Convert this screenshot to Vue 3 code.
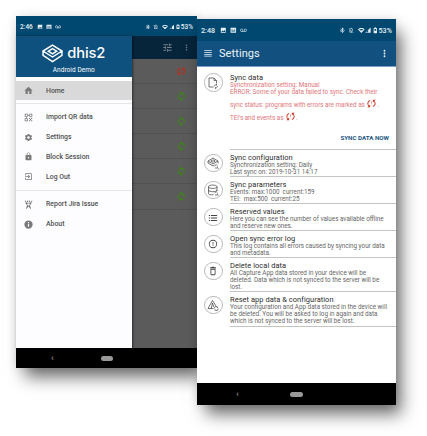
<script setup>
import { h } from 'vue'

const paths = {
  image: 'M21 3H3v18h18zM5 18l4-5 3 3.500L16 11l4 7z',
  mail: 'M2 3h20v18H2zm3 4v2l7 4.500L19 9V7l-7 4.500zm0 5v2h14v-2zm0 4v2h14v-2z',
  voicemail: 'M18.500 6C15.460 6 13 8.460 13 11.500c0 1.330.470 2.550 1.260 3.500H9.740c.790-.950 1.260-2.170 1.260-3.500C11 8.460 8.540 6 5.500 6S0 8.460 0 11.500 2.460 17 5.500 17h13c3.040 0 5.500-2.460 5.500-5.500S21.540 6 18.500 6zm-13 9a3.500 3.500 0 1 1 0-7 3.500 3.500 0 0 1 0 7zm13 0a3.500 3.500 0 1 1 0-7 3.500 3.500 0 0 1 0 7z',
  bluetooth: 'M7 12l-2-2-2 2 2 2 2-2zm10.710-4.290L12 2h-1v7.590L6.410 5 5 6.410 10.590 12 5 17.590 6.410 19 11 14.410V22h1l5.710-5.710-4.300-4.290 4.300-4.290zM13 5.830l1.880 1.880L13 9.590V5.830zm1.880 10.460L13 18.170v-3.760l1.880 1.880zM19 10l-2 2 2 2 2-2-2-2z',
  muted: 'M12 22a2 2 0 0 0 2-2h-4a2 2 0 0 0 2 2zM20.800 21.500L3.500 3.300 2.200 4.600l4.300 4.500C6.200 9.800 6 10.600 6 11.500V16l-2 2v1h12.800l2.700 2.800zM8 17v-6l6 6zM18 15.200V11c0-3-1.600-5.600-4.500-6.300V4a1.500 1.500 0 0 0-3 0v.700c-.800.200-1.500.500-2 .900l1.400 1.500C12.500 5.800 16 7.500 16 11v2z',
  wifi: 'M12 4C7.300 4 3.100 5.900 0 8.900L12 22 24 8.900C20.900 5.900 16.700 4 12 4zm0 3c3 0 5.500.900 7.600 2.200L16 13a7 7 0 0 0-8 0L4.400 9.200C6.500 7.900 9 7 12 7z',
  signal: 'M1 22h22V1zM13 11v9H5z',
  battery: 'M16 3.500h-2V1h-4v2.500H8C6.900 3.500 6 4.400 6 5.500v15.500c0 1.100.900 2 2 2h8c1.100 0 2-.900 2-2V5.500c0-1.100-.900-2-2-2zM9 7h6v7H9z',
  tune: 'M3 17v2h6v-2H3zM3 5v2h10V5H3zm10 16v-2h8v-2h-8v-2h-2v6h2zM7 9v2H3v2h4v2h2V9H7zm14 4v-2H11v2h10zm-6-4h2V7h4V5h-4V3h-2v6z',
  more: 'M12 8a2 2 0 1 0 0-4 2 2 0 0 0 0 4zm0 2a2 2 0 1 0 0 4 2 2 0 0 0 0-4zm0 6a2 2 0 1 0 0 4 2 2 0 0 0 0-4z',
  menu: 'M2 20h20v-2H2zm0-5h20v-2H2zm0-5h20V8H2zm0-7v2h20V3z',
  home: 'M10 21v-7h4v7h6v-9h3L12 2 1 12h3v9z',
  qr: 'M2 2h8v8H2zm2 2v4h4V4zM14 2h8v8h-8zm2 2v4h4V4zM2 14h8v8H2zm2 2v4h4v-4zM13 13h3v3h-3zM19 13h3v3h-3zM16 16h3v3h-3zM13 19h3v3h-3zM19 19h3v3h-3zM11 5h2v3h-2zM5 11h3v2H5zM17 11h3v1h-3z',
  gear: 'M19.140 12.940c.040-.300.060-.610.060-.940 0-.320-.020-.640-.070-.940l2.030-1.580a.490.490 0 0 0 .120-.610l-1.920-3.320a.488.488 0 0 0-.590-.220l-2.390.960c-.500-.380-1.030-.700-1.620-.940l-.360-2.540a.484.484 0 0 0-.480-.410h-3.840c-.240 0-.430.170-.470.410l-.360 2.540c-.590.240-1.130.570-1.620.940l-2.390-.960c-.220-.080-.470 0-.590.220L2.740 8.870c-.120.210-.080.470.120.610l2.030 1.580c-.050.300-.090.630-.090.940s.020.640.070.940l-2.030 1.580a.490.490 0 0 0-.120.610l1.920 3.320c.120.220.370.290.590.220l2.390-.960c.500.380 1.030.700 1.620.940l.360 2.540c.050.240.240.410.480.410h3.840c.240 0 .440-.170.470-.410l.360-2.540c.590-.240 1.130-.560 1.620-.940l2.390.960c.220.080.470 0 .590-.220l1.920-3.320c.120-.220.070-.470-.120-.610l-2.010-1.580zM12 15.600A3.600 3.600 0 1 1 12 8.400a3.600 3.600 0 0 1 0 7.200z',
  lock: 'M18 8h-1V6c0-2.760-2.240-5-5-5S7 3.240 7 6v2H6c-1.100 0-2 .900-2 2v10c0 1.100.900 2 2 2h12c1.100 0 2-.900 2-2V10c0-1.100-.900-2-2-2zm-6 9c-1.100 0-2-.900-2-2s.900-2 2-2 2 .900 2 2-.900 2-2 2zm3.100-9H8.900V6a3.100 3.100 0 0 1 6.200 0z',
  exit: 'M10.090 15.590L11.500 17l5-5-5-5-1.410 1.410L12.670 11H3v2h9.670zM19 3H5a2 2 0 0 0-2 2v4h2V5h14v14H5v-4H3v4a2 2 0 0 0 2 2h14c1.100 0 2-.900 2-2V5c0-1.100-.900-2-2-2z',
  bug: 'M3 1l5 6h8l5-6 1.500 1-4 6.500L21 9l-4 3-1 3 3 8h-2l-5-6-5 6H5l3-8-1-3-4-3 2.500-.500L1.500 2zM9 9v4l3 2 3-2V9zM8 2h3v3H8zm5 0h3v3h-3z',
  info: 'M12 1a11 11 0 1 0 0 22 11 11 0 0 0 0-22zm1.500 17h-3v-7.500h3zm0-9.500h-3v-3h3z',
  sync: 'M12 4V1L8 5l4 4V6a6 6 0 0 1 5.300 8.800l1.460 1.460A8 8 0 0 0 12 4zm0 14a6 6 0 0 1-5.300-8.800L5.240 7.740A8 8 0 0 0 12 20v3l4-4-4-4z',
  syncError: 'M3 12c0 2.210.910 4.200 2.360 5.640L3 20h6v-6l-2.240 2.240A6.003 6.003 0 0 1 9 6.350V4.260C5.550 5.150 3 8.270 3 12zM21 4h-6v6l2.240-2.240A6.003 6.003 0 0 1 15 17.650v2.090c3.450-.890 6-4.010 6-7.740 0-2.210-.910-4.200-2.360-5.640zM11.500 12.500h1V7.500h-1zM11.500 16h1v-1.500h-1z',
  list: 'M2 5h3v2H2zm0 6h3v2H2zm0 6h3v2H2zM7 5h15v2H7zm0 6h15v2H7zm0 6h15v2H7z',
  error: 'M11 15h2v2h-2zm0-8h2v6h-2zm1-5a10 10 0 1 0 0 20 10 10 0 0 0 0-20zm0 18a8 8 0 1 1 0-16 8 8 0 0 1 0 16z',
  trash: 'M6 20a2 2 0 0 0 2 2h8a2 2 0 0 0 2-2V7H6zM8 9h8v11H8zm7.500-6l-1-1h-5l-1 1H5v3h14V3z',
}

const outlines = {
  file: 'M13 20H4V2h10l5 5v6M14 2v5h5M14.500 18.500a3 3 0 0 1 5-2M21 18.500a3 3 0 0 1-5 2.500M19 14v2.500M17 21v2.500',
  layers: 'M12 2l10 6-10 6L2 8zM12 5.500L16.500 8 12 10.500 7.500 8zM2 8v4l10 6 3-2M22 8v5M15.500 18.500a3 3 0 0 1 5-2M21 19a3 3 0 0 1-5 2.500M20 21l3 2',
  database: 'M3 5.500c0-4.500 17-4.500 17 0s-17 4.500-17 0zM3 5.500V19c0 2 5 3.500 10 2.500M20 5.500V14M3 12c0 4.500 17 4.500 17 0M15.500 18.500a3 3 0 0 1 5-2M21 19a3 3 0 0 1-5 2.500M20 21l3 2',
  warning: 'M13 19H2L11 3l7 11M8.500 19L11 8l2.500 8M15 18.500a3 3 0 0 1 6-1v-2M22 19a3 3 0 0 1-6 2v2',
}

const Icon = ({ name }) =>
  h('svg', { viewBox: '0 0 24 24', class: 'icon' }, [
    outlines[name]
      ? h('path', { d: outlines[name], fill: 'none', stroke: 'currentColor', 'stroke-width': 1.5 })
      : h('path', { d: paths[name], fill: 'currentColor', 'fill-rule': 'evenodd' }),
  ])
Icon.props = ['name']

const leftStatus = ['image', 'mail', 'voicemail']
const rightStatus = ['bluetooth', 'muted', 'wifi', 'signal', 'battery']

const menu = [
  [
    { icon: 'qr', label: 'Import QR data' },
    { icon: 'gear', label: 'Settings' },
    { icon: 'lock', label: 'Block Session' },
    { icon: 'exit', label: 'Log Out' },
  ],
  [
    { icon: 'bug', label: 'Report Jira Issue' },
    { icon: 'info', label: 'About' },
  ],
]

const programs = ['syncError', 'sync', 'sync', 'sync', 'sync', 'sync']

const settings = [
  { icon: 'layers', title: 'Sync configuration', lines: ['Synchronization setting: Daily', 'Last sync on: 2019-10-31 14:17'] },
  { icon: 'database', title: 'Sync parameters', lines: ['Events: max:1000  current:159', 'TEI:  max:500  current:25'] },
  { icon: 'list', title: 'Reserved values', lines: ['Here you can see the number of values available offline', 'and reserve new ones.'] },
  { icon: 'error', title: 'Open sync error log', lines: ['This log contains all errors caused by syncing your data', 'and metadata.'] },
  { icon: 'trash', title: 'Delete local data', lines: ['All Capture App data stored in your device will be', 'deleted. Data which is not synced to the server will be', 'lost.'] },
  { icon: 'warning', title: 'Reset app data & configuration', lines: ['Your configuration and App data stored in the device will', 'be deleted. You will be asked to log in again and data', 'which is not synced to the server will be lost.'] },
]
</script>

<template>
  <main class="stage">
    <section class="phone home">
      <header class="status">
        <span class="clock">2:46</span>
        <Icon v-for="name in leftStatus" :key="name" :name="name" :class="name" />
        <span class="spacer"></span>
        <Icon v-for="name in rightStatus" :key="name" :name="name" :class="name" />
        <span class="charge">53%</span>
      </header>
      <div class="body">
        <nav class="drawer">
          <div class="brand">
            <div class="logo">
              <svg class="mark" viewBox="0 0 60 54">
                <path d="M30 3L57 20 30 37 3 20zM30 13L42 20.500 30 28 18 20.500zM3 20v12l27 18 27-18V20" />
              </svg>
              <span>dhis2</span>
            </div>
            <div class="server">Android Demo</div>
          </div>
          <div class="item active"><Icon name="home" /><span>Home</span></div>
          <div v-for="(group, i) in menu" :key="i" class="group">
            <div v-for="item in group" :key="item.label" class="item">
              <Icon :name="item.icon" /><span>{{ item.label }}</span>
            </div>
          </div>
        </nav>
        <div class="behind">
          <div class="tools"><Icon name="tune" /><Icon name="more" class="dots" /></div>
          <div v-for="(name, i) in programs" :key="i" class="program">
            <Icon :name="name" :class="name" />
          </div>
        </div>
      </div>
      <footer class="navbar"><span class="back">‹</span><span class="pill"></span></footer>
    </section>

    <section class="phone config">
      <header class="status">
        <span class="clock">2:48</span>
        <Icon v-for="name in leftStatus" :key="name" :name="name" :class="name" />
        <span class="spacer"></span>
        <Icon v-for="name in rightStatus" :key="name" :name="name" :class="name" />
        <span class="charge">53%</span>
      </header>
      <div class="appbar">
        <Icon name="menu" class="burger" />
        <h1>Settings</h1>
        <Icon name="more" class="dots" />
      </div>
      <div class="list">
        <article class="row failed">
          <div class="badge"><Icon name="file" /></div>
          <div class="text">
            <h2>Sync data</h2>
            <p>Synchronization setting: Manual</p>
            <p>ERROR: Some of your data failed to sync. Check their</p>
            <p class="tall">sync status: programs with errors are marked as <Icon name="syncError" />.</p>
            <p class="tall">TEI's and events as <Icon name="syncError" />.</p>
            <button type="button">SYNC DATA NOW</button>
          </div>
        </article>
        <article v-for="row in settings" :key="row.title" class="row">
          <div class="badge"><Icon :name="row.icon" :class="row.icon" /></div>
          <div class="text">
            <h2>{{ row.title }}</h2>
            <p v-for="line in row.lines" :key="line">{{ line }}</p>
          </div>
        </article>
      </div>
      <footer class="navbar"><span class="back">‹</span><span class="pill"></span></footer>
    </section>
  </main>
</template>

<style>
body {
  background: #fff;
  overflow: hidden;
}
</style>

<style scoped>
.stage {
  box-sizing: border-box;
  width: 427px;
  height: 436px;
  padding: 16px 0 0 16px;
  display: flex;
  align-items: flex-start;
  overflow: hidden;
  font-family: Roboto, "Liberation Sans", sans-serif;
  color: #444;
}
.phone {
  display: flex;
  flex-direction: column;
  flex: none;
  box-shadow: 7px 11px 16px -2px rgba(0, 0, 0, 0.58), 0 0 10px rgba(0, 0, 0, 0.1);
}
.home {
  width: 181px;
  height: 352px;
}
.config {
  width: 199px;
  height: 386px;
  margin-top: 3px;
  background: #fff;
  z-index: 1;
}
.icon {
  display: block;
  flex: none;
  width: 9px;
  height: 9px;
}
.status {
  box-sizing: border-box;
  display: flex;
  align-items: center;
  background: #004870;
  color: #e9f1f6;
  font-weight: 500;
  flex: none;
}
.home .status {
  height: 20px;
  padding: 1px 4px 0 4px;
  font-size: 6.500px;
}
.config .status {
  height: 22px;
  padding: 1px 4px 0 4px;
  font-size: 7.200px;
}
.status .icon {
  width: 0.920em;
  height: 0.920em;
}
.clock {
  width: 2.640em;
}
.status .image {
  margin-right: 0.480em;
}
.status .mail {
  margin-right: 0.400em;
}
.status .bluetooth {
  margin-right: 0.400em;
}
.status .muted {
  margin-right: 0.450em;
}
.status .signal {
  width: 0.820em;
  margin: 0 0.100em 0 0.100em;
}
.status .voicemail {
  width: 0.970em;
}
.spacer {
  flex: 1;
}
.body {
  flex: 1;
  display: flex;
  min-height: 0;
}
.drawer {
  width: 115.500px;
  background: #fdfdff;
  box-shadow: 1px 0 2px rgba(0, 0, 0, 0.5);
  z-index: 1;
}
.brand {
  box-sizing: border-box;
  height: 41px;
  background: #0e507e;
  color: #fff;
  padding-top: 7px;
  text-align: center;
}
.logo {
  display: flex;
  align-items: center;
  justify-content: center;
  gap: 4px;
  height: 20px;
  font: 500 14.700px/20px Inter, sans-serif;
}
.logo span {
  letter-spacing: -0.100px;
}
.mark {
  width: 21px;
  height: 19px;
  fill: none;
  stroke: #fff;
  stroke-width: 4.200;
}
.server {
  font-size: 6.500px;
  line-height: 14px;
  letter-spacing: 0.060px;
}
.item {
  display: flex;
  align-items: center;
  height: 19.800px;
  padding-left: 7.500px;
  gap: 13.500px;
  font-size: 6.900px;
  font-weight: 500;
  color: #505050;
}
.item .icon {
  color: #7a7a7a;
}
.active {
  height: 19px;
  margin: 4px 0 3px;
  background: #d9d9da;
}
.group {
  border-top: 1px solid #e6e6e8;
  padding: 3.400px 0;
}
.behind {
  flex: 1;
  background: #5b5b5b;
}
.tools {
  display: flex;
  align-items: center;
  height: 23px;
  background: #06243a;
  color: #75838d;
  padding-left: 29px;
  gap: 8.500px;
}
.tools .icon {
  width: 13px;
  height: 11px;
}
.tools .dots {
  width: 9px;
  height: 9px;
}
.program {
  box-sizing: border-box;
  height: 25.100px;
  padding-right: 10.500px;
  display: flex;
  align-items: center;
  justify-content: flex-end;
  border-bottom: 1px solid #515151;
}
.program .icon {
  width: 10.500px;
  height: 10.500px;
  stroke: currentColor;
  stroke-width: 0.500;
}
.program .sync {
  color: #3d8a14;
}
.program .syncError {
  color: #bd301b;
}
.navbar {
  flex: none;
  display: flex;
  align-items: center;
  background: #000;
  color: #aaa;
}
.back {
  font-size: 9px;
  line-height: 9px;
  width: 3px;
}
.home .navbar {
  height: 20px;
  padding-left: 35px;
}
.pill {
  height: 5px;
  border-radius: 3px;
  background: #999;
}
.home .pill {
  width: 12px;
  margin-left: 46.500px;
}
.config .navbar {
  height: 22px;
  padding-left: 39px;
}
.config .pill {
  width: 13px;
  margin-left: 51px;
}
.appbar {
  box-sizing: border-box;
  flex: none;
  height: 26px;
  display: flex;
  align-items: center;
  background: #11507f;
  border-bottom: 1px solid #7ba0cb;
  color: #edf4f9;
  padding: 0 6px;
}
.burger {
  width: 10px;
  height: 9px;
}
.appbar h1 {
  flex: 1;
  margin: 0 0 0 6px;
  font-size: 11px;
  font-weight: 400;
  letter-spacing: 0.080px;
}
.appbar .dots {
  width: 11px;
  height: 11px;
}
.list {
  flex: 1;
  padding-top: 2px;
}
.row {
  display: flex;
  gap: 7.300px;
  padding-left: 7.300px;
}
.badge {
  box-sizing: border-box;
  flex: none;
  width: 18.400px;
  height: 18.400px;
  margin-top: 3.400px;
  border: 1px solid #bcbcbc;
  border-radius: 50%;
  display: grid;
  place-items: center;
  color: #454545;
}
.badge .icon {
  width: 10px;
  height: 10px;
}
.badge .layers,
.badge .database,
.badge .warning,
.failed .badge .icon {
  width: 12px;
  height: 12px;
}
.text {
  box-sizing: border-box;
  flex: 1;
  padding-top: 3.800px;
  border-bottom: 1px solid #c4c4c4;
  color: #666;
}
.text h2 {
  margin: 0;
  font-size: 7.450px;
  line-height: 7.800px;
  font-weight: 400;
  color: #2c2c2c;
  letter-spacing: 0.060px;
  white-space: nowrap;
}
.text p {
  margin: 0;
  font-size: 6.300px;
  line-height: 7.200px;
  white-space: pre;
}
.failed .text {
  height: 81.200px;
  padding-top: 5px;
}
.failed .badge {
  margin-top: 4.400px;
}
.failed p {
  color: #e2767a;
}
.failed .tall {
  line-height: 12.400px;
  height: 12.400px;
  display: flex;
  align-items: center;
  position: relative;
  top: 3px;
}
.failed .tall .icon {
  width: 11px;
  height: 11px;
  margin: -3px 0 0;
  color: #d03a25;
}
.failed button {
  display: block;
  margin: 13px 7px 0 auto;
  padding: 0;
  border: 0;
  background: none;
  font: 700 6.200px/8px Roboto, sans-serif;
  color: #1c557f;
}
</style>
